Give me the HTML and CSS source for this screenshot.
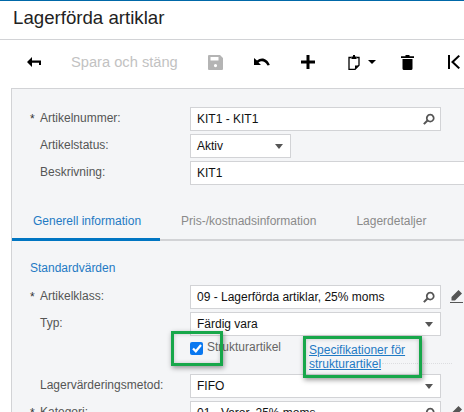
FILE: index.html
```html
<!DOCTYPE html>
<html lang="en">
<head>
    <meta charset="UTF-8">
    <meta name="viewport" content="width=device-width, initial-scale=1.0">
    <title>Lagerförda artiklar</title>
    <link rel="stylesheet" href="styles.css">
</head>
<body>
    <div class="page">
        <h1 class="title">Lagerförda artiklar</h1>

        <div class="toolbar">
            <svg class="tool tool-back" width="14" height="10" viewBox="0 0 14 10"><path d="M0 5 5 0v3.500h9V8h-2V5.700H5V10z"/></svg>
            <span class="save-close">Spara och stäng</span>
            <svg class="tool tool-save" width="15" height="15" viewBox="0 0 15 15"><path fill="#b4b4b4" fill-rule="evenodd" d="M1 0h11l3 3v11a1 1 0 0 1-1 1H1a1 1 0 0 1-1-1V1a1 1 0 0 1 1-1zm1.500 2v3.500h8V2zm5 7a1.600 1.600 0 1 0 0 3.200 1.600 1.600 0 0 0 0-3.200z"/></svg>
            <svg class="tool tool-undo" width="16" height="10" viewBox="0 0 16 10"><path d="M0 1v7h7L4.500 5.500C7 3.500 11 3.700 13.500 8.500l2.300-.5C13.500 1.500 7.500-.5 3 3.500z"/></svg>
            <svg class="tool tool-add" width="14" height="14" viewBox="0 0 14 14"><path d="M5.500 0h3v5.500H14v3H8.500V14h-3V8.500H0v-3h5.500z"/></svg>
            <svg class="tool tool-paste" width="12" height="15" viewBox="0 0 12 15"><path fill="none" stroke="#000" stroke-width="1.300" d="M3.500 2.500H1v11.800h6l4-4V2.500H8.500"/><path d="M3.500 1.500h1.500V0h2v1.500h1.500V4h-5zM7 10.500h4L7 14.500z"/></svg>
            <svg class="tool tool-caret" width="8" height="4" viewBox="0 0 8 4"><path d="M0 0h8L4 4z"/></svg>
            <svg class="tool tool-delete" width="13" height="15" viewBox="0 0 13 15"><path d="M4.500 0h4v1.200H13v1.800H0V1.200h4.500zM1.500 4h10v9.500A1.500 1.500 0 0 1 10 15H3a1.500 1.500 0 0 1-1.500-1.500z"/></svg>
            <svg class="tool tool-first" width="12" height="14" viewBox="0 0 12 14"><path d="M0 0h2v14H0zM10.500 0 12 1.300 6 7l6 5.700-1.500 1.300L3 7z"/></svg>
        </div>

        <div class="panel">
            <div class="summary">
                <div class="row">
                    <label class="label required">Artikelnummer:</label>
                    <div class="field field-wide"><span>KIT1 - KIT1</span><svg class="search" width="12" height="12" viewBox="0 0 14 14"><use href="#icon-search"/></svg></div>
                </div>
                <div class="row">
                    <label class="label">Artikelstatus:</label>
                    <div class="field field-short"><span>Aktiv</span><i class="caret"></i></div>
                </div>
                <div class="row">
                    <label class="label">Beskrivning:</label>
                    <div class="field field-full"><span>KIT1</span></div>
                </div>
            </div>

            <div class="tabs">
                <div class="tab tab-active">Generell information</div>
                <div class="tab tab-price">Pris-/kostnadsinformation</div>
                <div class="tab tab-stock">Lagerdetaljer</div>
            </div>

            <div class="details">
                <div class="section-title">Standardvärden</div>
                <div class="row">
                    <label class="label required">Artikelklass:</label>
                    <div class="field field-wide"><span>09 - Lagerförda artiklar, 25% moms</span><svg class="search" width="12" height="12" viewBox="0 0 14 14"><use href="#icon-search"/></svg></div>
                    <svg class="edit" width="13" height="13" viewBox="0 0 13 13"><use href="#icon-edit"/></svg>
                </div>
                <div class="row">
                    <label class="label">Typ:</label>
                    <div class="field field-wide"><span>Färdig vara</span><i class="caret"></i></div>
                </div>
                <div class="check-row">
                    <div class="check-box"><svg width="10" height="9" viewBox="0 0 10 9"><path fill="none" stroke="#fff" stroke-width="2.200" d="M1 4.500 3.800 7.300 9 1"/></svg></div>
                    <span class="check-label">Strukturartikel</span>
                    <a class="spec-link">Specifikationer för strukturartikel</a>
                    <div class="dotted"></div>
                </div>
                <div class="row">
                    <label class="label">Lagervärderingsmetod:</label>
                    <div class="field field-wide"><span>FIFO</span><i class="caret"></i></div>
                </div>
                <div class="row">
                    <label class="label required">Kategori:</label>
                    <div class="field field-wide"><span>01 - Varor, 25% moms</span><svg class="search" width="12" height="12" viewBox="0 0 14 14"><use href="#icon-search"/></svg></div>
                    <svg class="edit" width="13" height="13" viewBox="0 0 13 13"><use href="#icon-edit"/></svg>
                </div>
            </div>
        </div>

        <div class="callout callout-check"></div>
        <div class="callout callout-link"></div>
    </div>

    <svg class="defs" width="0" height="0">
        <symbol id="icon-search" viewBox="0 0 14 14"><path fill="none" stroke="#555" stroke-width="2" d="M9 2a4 4 0 1 1-.1 0z" transform="translate(-.5)"/><path stroke="#555" stroke-width="2.400" d="M5.500 8.500 1 13"/></symbol>
        <symbol id="icon-edit" viewBox="0 0 13 13"><path fill="#555" d="M8.500 0 12 3.500 5 10.500H1.500V7zM0 12h13v1H0z"/></symbol>
    </svg>
</body>
</html>
```
FILE: styles.css
```css
html, body {
    margin: 0;
    padding: 0;
}
body {
    font-family: "Liberation Sans", Arial, sans-serif;
    background-color: white;
    overflow: hidden;
}
.page {
    position: relative;
    width: 464px;
    height: 412px;
    overflow: hidden;
    border-top: 1px solid #0068a8;
    box-sizing: border-box;
}
.title {
    margin: 0;
    height: 39px;
    padding: 5px 0 0 13px;
    box-sizing: border-box;
    font-size: 18.67px;
    line-height: 24px;
    font-weight: normal;
    color: #222;
    border-bottom: 1px solid #d2d3d6;
}
.toolbar {
    display: flex;
    align-items: center;
    height: 48px;
    padding-bottom: 4px;
    box-sizing: border-box;
    flex-shrink: 0;
}
.tool {
    flex-shrink: 0;
}
.tool-back {
    margin-left: 27px;
}
.save-close {
    margin-left: 30px;
    font-size: 14.67px;
    color: #c2c2c2;
    white-space: nowrap;
}
.tool-save {
    margin-left: 30px;
}
.tool-undo {
    margin-left: 31px;
}
.tool-add {
    margin-left: 31px;
}
.tool-paste {
    margin-left: 33px;
}
.tool-caret {
    margin-left: 8px;
}
.tool-delete {
    margin-left: 25px;
}
.tool-first {
    margin-left: 34px;
}
.panel {
    margin-left: 11px;
    width: 480px;
    height: 340px;
    background-color: #f4f5f7;
    border: 1px solid #d2d3d6;
    border-right: none;
    box-sizing: border-box;
}
.summary {
    padding: 18px 0 0 18px;
}
.row {
    display: flex;
    align-items: flex-start;
    margin-bottom: 3px;
    height: 24px;
}
.label {
    position: relative;
    width: 160px;
    padding-left: 10px;
    flex-shrink: 0;
    font-size: 12px;
    line-height: 22px;
    color: #555;
    box-sizing: border-box;
}
.required::before {
    content: "*";
    position: absolute;
    left: 0;
    top: 1px;
    color: #333;
}
.field {
    display: flex;
    align-items: center;
    justify-content: space-between;
    height: 24px;
    padding: 0 5px 0 6px;
    box-sizing: border-box;
    background-color: white;
    border: 1px solid #d2d3d6;
    font-size: 12px;
    color: #111;
    flex-shrink: 0;
}
.field-wide {
    width: 251px;
}
.field-short {
    width: 101px;
}
.field-full {
    width: 300px;
}
.edit {
    margin: 5px 0 0 9px;
    flex-shrink: 0;
}
.caret {
    width: 0;
    height: 0;
    margin-right: 2px;
    border-left: 4px solid transparent;
    border-right: 4px solid transparent;
    border-top: 5px solid #555;
}
.tabs {
    display: flex;
    height: 28px;
    margin-top: 26px;
    border-bottom: 2px solid #d2d3d6;
    box-sizing: content-box;
    font-size: 12px;
    line-height: 20px;
    color: #8a8a8a;
}
.tab {
    white-space: nowrap;
    box-sizing: content-box;
}
.tab-active {
    width: 148px;
    padding-left: 21px;
    box-sizing: border-box;
    height: 30px;
    color: #1f7ac4;
    border-bottom: 3px solid #0075c2;
}
.tab-price {
    margin-left: 21px;
}
.tab-stock {
    margin-left: 40px;
}
.details {
    padding: 17px 0 0 18px;
}
.section-title {
    height: 27px;
    font-size: 12px;
    line-height: 20px;
    color: #1f7ac4;
}
.check-row {
    position: relative;
    height: 35px;
    padding-left: 160px;
    display: flex;
    align-items: flex-start;
    margin-top: 3px;
}
.check-box {
    display: flex;
    align-items: center;
    justify-content: center;
    width: 13px;
    height: 13px;
    margin-top: 3px;
    background-color: #0a78f0;
    border-radius: 2px;
    flex-shrink: 0;
}
.check-label {
    margin-left: 4px;
    font-size: 12px;
    line-height: 16px;
    color: #666;
    white-space: nowrap;
}
.spec-link {
    margin: 4px 0 0 28px;
    width: 100px;
    flex-shrink: 0;
    font-size: 12px;
    line-height: 14px;
    color: #1f7ac4;
    text-decoration: underline;
}
.dotted {
    width: 70px;
    margin: 24px 0 0 -27px;
    flex-shrink: 0;
    border-top: 1px dotted #dcdde0;
}
.callout {
    position: absolute;
    box-sizing: border-box;
    border: 3px solid #17a74a;
    box-shadow: 1px 2px 5px rgba(0, 0, 0, 0.4), inset 0 0 4px rgba(0, 0, 0, 0.2);
}
.callout-check {
    left: 171px;
    top: 330px;
    width: 52px;
    height: 35px;
}
.callout-link {
    left: 303px;
    top: 335px;
    width: 119px;
    height: 42px;
}
.defs {
    position: absolute;
}
```
